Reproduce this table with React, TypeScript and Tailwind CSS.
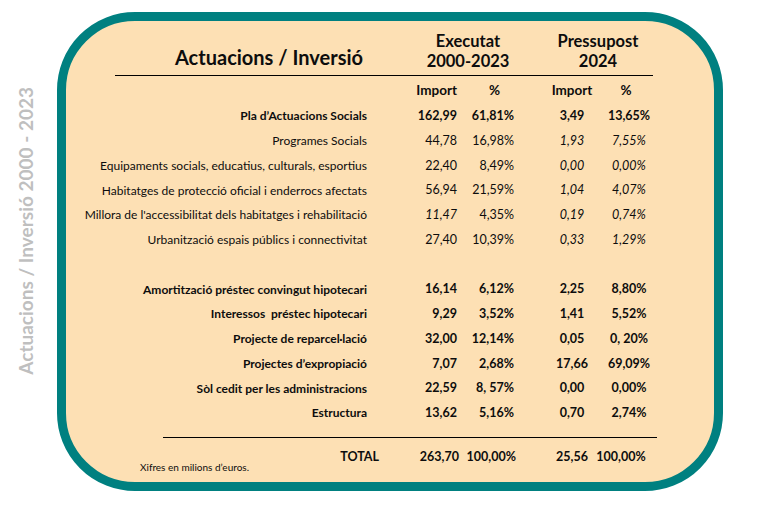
type Row = {
  label: string;
  a: string;
  b: string;
  c: string;
  d: string;
  bold?: boolean;
  italicA?: boolean;
  italicPress?: boolean;
};

const rows: (Row | null)[] = [
  { label: "Pla d’Actuacions Socials", a: "162,99", b: "61,81%", c: "3,49", d: "13,65%", bold: true },
  { label: "Programes Socials", a: "44,78", b: "16,98%", c: "1,93", d: "7,55%", italicPress: true },
  { label: "Equipaments socials, educatius, culturals, esportius", a: "22,40", b: "8,49%", c: "0,00", d: "0,00%", italicPress: true },
  { label: "Habitatges de protecció oficial i enderrocs afectats", a: "56,94", b: "21,59%", c: "1,04", d: "4,07%", italicPress: true },
  { label: "Millora de l'accessibilitat dels habitatges i rehabilitació", a: "11,47", b: "4,35%", c: "0,19", d: "0,74%", italicA: true, italicPress: true },
  { label: "Urbanització espais públics i connectivitat", a: "27,40", b: "10,39%", c: "0,33", d: "1,29%", italicPress: true },
  null,
  { label: "Amortització préstec convingut hipotecari", a: "16,14", b: "6,12%", c: "2,25", d: "8,80%", bold: true },
  { label: "Interessos  préstec hipotecari", a: "9,29", b: "3,52%", c: "1,41", d: "5,52%", bold: true },
  { label: "Projecte de reparcel·lació", a: "32,00", b: "12,14%", c: "0,05", d: "0, 20%", bold: true },
  { label: "Projectes d’expropiació", a: "7,07", b: "2,68%", c: "17,66", d: "69,09%", bold: true },
  { label: "Sòl cedit per les administracions", a: "22,59", b: "8, 57%", c: "0,00", d: "0,00%", bold: true },
  { label: "Estructura", a: "13,62", b: "5,16%", c: "0,70", d: "2,74%", bold: true },
];

const cols = "grid grid-cols-[301px_90px_57px_90px_50px] items-center";

function DataRow({ row }: { row: Row | null }) {
  if (!row) return <div className="h-[24.75px]" />;
  return (
    <div className={`${cols} h-[24.75px] text-[12px] whitespace-pre ${row.bold ? "font-bold" : ""}`}>
      <span className="text-right">{row.label}</span>
      <span className={`text-right text-[12.5px] ${row.italicA ? "italic" : ""}`}>{row.a}</span>
      <span className="text-right text-[12.5px]">{row.b}</span>
      <span className={`pl-[26px] text-center text-[12.5px] ${row.italicPress ? "italic" : ""}`}>{row.c}</span>
      <span className={`text-center text-[12.5px] ${row.italicPress ? "italic" : ""}`}>{row.d}</span>
    </div>
  );
}

export default function App() {
  return (
    <div className="flex min-h-screen bg-white font-['Lato',sans-serif] text-[#0d0d0d]">
      <div className="flex h-[462px] w-[57px] items-center justify-center pr-[4px]">
        <span className="rotate-180 text-[19px] font-bold whitespace-nowrap text-[#bfbfbf] [writing-mode:vertical-rl]">
          Actuacions / Inversió 2000 - 2023
        </span>
      </div>

      <div className="mt-[12px] h-[479px] w-[666px] rounded-[78px] border-[9px] border-[#008080] bg-[#fde0b4]">
        <div className="flex pt-[10px] pl-[64px]">
          <h1 className="w-[278px] pt-[16px] text-center text-[20px] leading-[20px] font-bold">
            Actuacions / Inversió
          </h1>
          <div className="w-[120px] text-center text-[16.5px] leading-[20px] font-bold">
            Executat
            <br />
            2000-2023
          </div>
          <div className="ml-[15px] w-[110px] text-center text-[16.5px] leading-[20px] font-bold">
            Pressupost
            <br />
            2024
          </div>
        </div>
        <div className="mt-[4px] ml-[49px] w-[538px] border-t border-black" />

        <div className={`${cols} h-[28px] text-[13.5px] font-bold`}>
          <span />
          <span className="text-right">Import</span>
          <span className="pl-[18px] text-center">%</span>
          <span className="pl-[26px] text-center">Import</span>
          <span className="pr-[6px] text-center">%</span>
        </div>

        {rows.map((r, i) => (
          <DataRow key={i} row={r} />
        ))}

        <div className="mt-[11px] ml-[97px] w-[494px] border-t border-black" />

        <div className="grid h-[34px] grid-cols-[313px_80px_57px_88px_50px] items-start pt-[10px] text-[12.5px] font-bold">
          <span className="flex">
            <span className="pt-[12px] pl-[74px] text-[10px] font-normal">Xifres en milions d’euros.</span>
            <span className="ml-auto">TOTAL</span>
          </span>
          <span className="text-right">263,70</span>
          <span className="text-right">100,00%</span>
          <span className="pl-[24px] text-center">25,56</span>
          <span className="flex justify-center pr-[16px] whitespace-nowrap">100,00%</span>
        </div>
      </div>
    </div>
  );
}
